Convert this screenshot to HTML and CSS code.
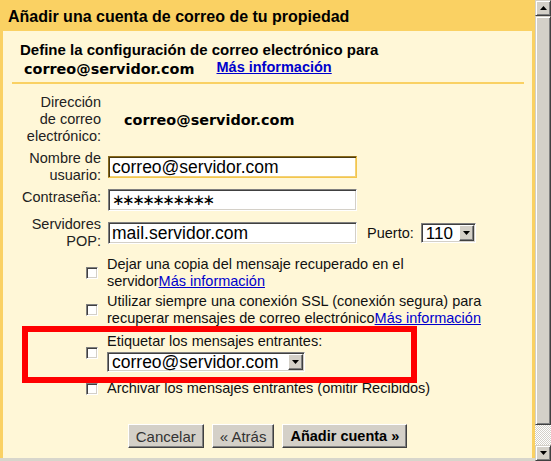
FILE: index.html
```html
<!DOCTYPE html>
<html lang="es">
<head>
<meta charset="UTF-8">
<title>Añadir una cuenta de correo</title>
<meta name="viewport" content="width=device-width, initial-scale=1.0">
<link rel="stylesheet" href="styles.css">
</head>
<body>

<div class="window">

<div class="dialog">
    <div class="dialog-title">Añadir una cuenta de correo de tu propiedad</div>

    <div class="dialog-body">

        <!-- INTRO -->
        <div class="intro">
            <div class="intro-text">Define la configuración de correo electrónico para</div>
            <div class="intro-line">
                <span class="addr">correo@servidor.com</span>
                <a href="#" class="intro-link">Más información</a>
            </div>
        </div>

        <!-- FORM -->
        <div class="form">
            <div class="label">Dirección<br>de correo<br>electrónico:</div>
            <div class="field"><span class="addr addr-value">correo@servidor.com</span></div>

            <div class="label">Nombre de<br>usuario:</div>
            <div class="field"><input class="text focused" type="text" value="correo@servidor.com"></div>

            <div class="label">Contraseña:</div>
            <div class="field"><input class="text pass" type="text" value="∗∗∗∗∗∗∗∗∗∗"></div>

            <div class="label">Servidores<br>POP:</div>
            <div class="field">
                <input class="text" type="text" value="mail.servidor.com">
                <span class="port-label">Puerto:</span>
                <span class="select port">
                    <span class="select-value">110</span>
                    <span class="select-btn"><svg width="7" height="4" viewBox="0 0 7 4"><path d="M0 0h7L3.5 4z" fill="#000"/></svg></span>
                </span>
            </div>
        </div>

        <!-- OPTIONS -->
        <div class="options">
            <div class="option">
                <span class="check"></span>
                <div class="option-text">Dejar una copia del mensaje recuperado en el servidor<a href="#">Más información</a></div>
            </div>
            <div class="option">
                <span class="check"></span>
                <div class="option-text">Utilizar siempre una conexión SSL (conexión segura) para recuperar mensajes de correo electrónico<a href="#">Más información</a></div>
            </div>
            <div class="option option-label">
                <span class="check"></span>
                <div class="option-text">
                    Etiquetar los mensajes entrantes:
                    <span class="select label-select">
                        <span class="select-value">correo@servidor.com</span>
                        <span class="select-btn"><svg width="7" height="4" viewBox="0 0 7 4"><path d="M0 0h7L3.5 4z" fill="#000"/></svg></span>
                    </span>
                </div>
                <div class="highlight"></div>
            </div>
            <div class="option">
                <span class="check"></span>
                <div class="option-text">Archivar los mensajes entrantes (omitir Recibidos)</div>
            </div>
        </div>

        <!-- BUTTONS -->
        <div class="actions">
            <button class="btn">Cancelar</button>
            <button class="btn">« Atrás</button>
            <button class="btn btn-main">Añadir cuenta »</button>
        </div>

    </div>
</div>

<!-- SCROLLBAR -->
<div class="scrollbar">
    <div class="sb-btn"><svg width="7" height="4" viewBox="0 0 7 4"><path d="M3.5 0L7 4H0z" fill="#000"/></svg></div>
    <div class="sb-thumb"></div>
    <div class="sb-track"></div>
    <div class="sb-btn"><svg width="7" height="4" viewBox="0 0 7 4"><path d="M0 0h7L3.5 4z" fill="#000"/></svg></div>
</div>

</div>

</body>
</html>
```

FILE: styles.css
```css
body {
    margin: 0;
    font-family: "Liberation Sans", Arial, sans-serif;
    font-size: 14.5px;
    color: #111;
    background: #fff7d7;
}

.window {
    display: flex;
    width: 551px;
    height: 461px;
    overflow: hidden;
}

/* DIALOG */
.dialog {
    width: 535px;
    height: 461px;
    display: flex;
    flex-direction: column;
    background: #fad163;
    box-sizing: border-box;
    border-bottom: 3px solid #d8d6cc;
}

.dialog-title {
    height: 31px;
    box-sizing: border-box;
    padding: 2px 0 0 8px;
    line-height: 29px;
    font-size: 16px;
    font-weight: bold;
    color: #000;
}

.dialog-body {
    flex: 1;
    margin: 0 3px;
    background: #fff7d7;
}

/* INTRO */
.intro {
    box-sizing: border-box;
    height: 53px;
    margin: 0 8px 0 9px;
    padding: 10px 0 0 8px;
    border-bottom: 2px solid #fad163;
}

.intro-text {
    font-size: 15px;
    font-weight: bold;
    line-height: 18px;
    color: #000;
}

.intro-line {
    display: flex;
    align-items: baseline;
    gap: 22px;
    padding-left: 4px;
    line-height: 21px;
}

.addr {
    font-family: "DejaVu Sans", Verdana, sans-serif;
    font-size: 14.4px;
    font-weight: bold;
    color: #000;
}

.intro-link {
    font-size: 14.5px;
    font-weight: bold;
    color: #0000cc;
    position: relative;
    top: -2px;
}

/* FORM */
.form {
    display: grid;
    grid-template-columns: 98px 1fr;
    column-gap: 7px;
    row-gap: 5px;
    margin-top: 10px;
}

.label {
    text-align: right;
    line-height: 17px;
    color: #222;
}

.field {
    display: flex;
    align-items: center;
}

.addr-value {
    padding-left: 16px;
}

.text {
    width: 249px;
    height: 22px;
    box-sizing: border-box;
    margin: 0;
    padding: 0 3px;
    font-family: "Liberation Sans", Arial, sans-serif;
    font-size: 17.5px;
    color: #000;
    background: #fff;
    border: 1px solid;
    border-color: #808080 #fff #fff #808080;
    box-shadow: inset 1px 1px #404040, inset -1px -1px #d4d0c8;
    outline: none;
}

.text.focused {
    border-color: #8a6a1c #f5c64a #f5c64a #8a6a1c;
    box-shadow: inset 1px 1px #4a3a10, inset -1px -1px #f1d17a;
}

.text.pass {
    font-family: "DejaVu Sans", sans-serif;
    font-size: 15px;
    letter-spacing: -2.5px;
}

.port-label {
    margin-left: 10px;
}

/* FAKE SELECT */
.select {
    display: inline-flex;
    align-items: center;
    justify-content: space-between;
    height: 20px;
    box-sizing: border-box;
    background: #fff;
    border: 1px solid;
    border-color: #808080 #fff #fff #808080;
    box-shadow: inset 1px 1px #404040, inset -1px -1px #d4d0c8;
    padding: 1px;
}

.select-value {
    padding-left: 3px;
    font-size: 17.5px;
    line-height: 17px;
    color: #000;
}

.select-btn {
    width: 15px;
    height: 16px;
    box-sizing: border-box;
    display: flex;
    align-items: center;
    justify-content: center;
    background: #d4d0c8;
    border: 1px solid;
    border-color: #fff #404040 #404040 #fff;
    box-shadow: inset -1px -1px #808080;
}

.port {
    width: 55px;
    margin-left: 7px;
}

.port .select-value {
    font-size: 17px;
}

.label-select {
    display: flex;
    width: 198px;
    height: 20px;
    margin-top: 2px;
}

/* OPTIONS */
.options {
    display: flex;
    flex-direction: column;
    gap: 3px;
    margin: 6px 0 0 83px;
    width: 398px;
}

.option {
    display: flex;
    align-items: center;
    gap: 9px;
    line-height: 17px;
}

.option-label {
    position: relative;
    margin: 3px 0 5px;
}

.option-text a {
    color: #0000cc;
}

.check {
    flex: none;
    width: 12px;
    height: 12px;
    box-sizing: border-box;
    background: #fff;
    border: 1px solid;
    border-color: #808080 #fff #fff #808080;
    box-shadow: inset 1px 1px #404040, inset -1px -1px #d4d0c8;
}

/* RED MARK */
.highlight {
    position: absolute;
    left: -64px;
    top: -7px;
    width: 395px;
    height: 57px;
    box-sizing: border-box;
    border: 6px solid #ff0000;
}

/* BUTTONS */
.actions {
    display: flex;
    justify-content: center;
    gap: 8px;
    margin-top: 27px;
}

.btn {
    height: 24px;
    padding: 0 7px;
    font-family: "Liberation Sans", Arial, sans-serif;
    font-size: 15px;
    color: #333;
    background: #d4d0c8;
    border: 1px solid;
    border-color: #fff #404040 #404040 #fff;
    box-shadow: inset -1px -1px #808080;
}

.btn-main {
    font-size: 14.5px;
    font-weight: bold;
    color: #000;
}

/* SCROLLBAR */
.scrollbar {
    width: 16px;
    display: flex;
    flex-direction: column;
    background: #d4d0c8;
}

.sb-btn {
    height: 16px;
    box-sizing: border-box;
    display: flex;
    align-items: center;
    justify-content: center;
    border: 1px solid;
    border-color: #d4d0c8 #404040 #404040 #d4d0c8;
    box-shadow: inset 1px 1px #fff, inset -1px -1px #808080;
}

.sb-thumb {
    flex: 1;
    border: 1px solid;
    border-color: #d4d0c8 #404040 #404040 #d4d0c8;
    box-shadow: inset 1px 1px #fff, inset -1px -1px #808080;
}

.sb-track {
    height: 20px;
    background: repeating-conic-gradient(#fff 0 25%, #d4d0c8 0 50%) 0 0 / 2px 2px;
}
```
